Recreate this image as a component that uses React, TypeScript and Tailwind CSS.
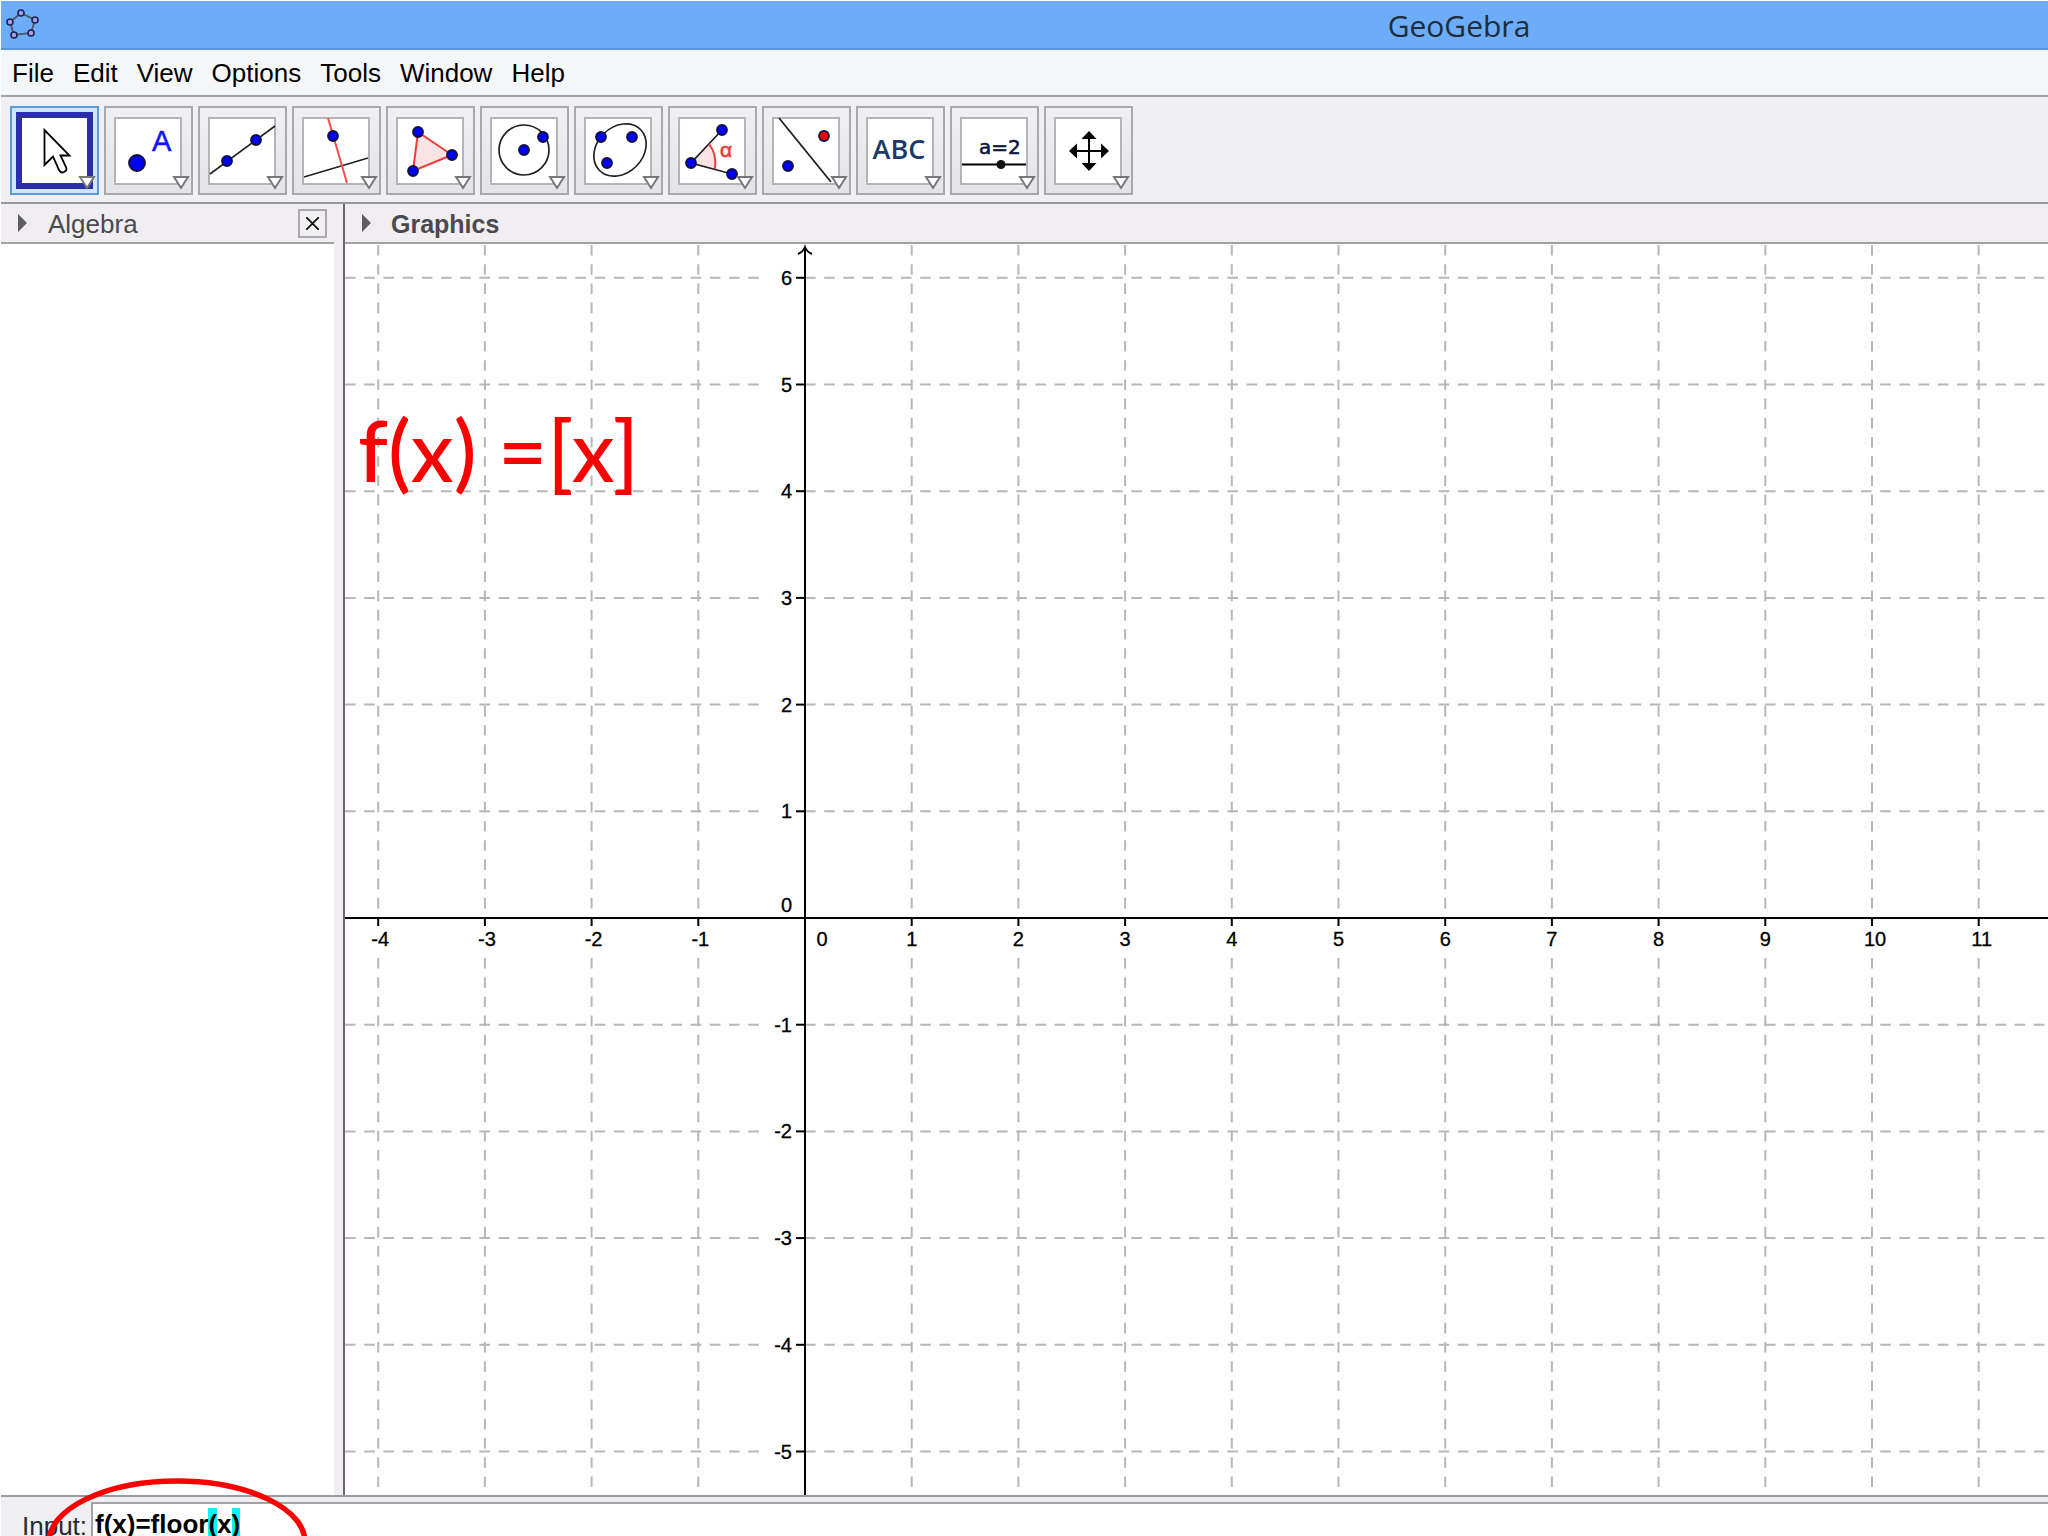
import React, { useState } from "react";

const UNIT = 106.7;
const ORIGIN_X = 460;
const ORIGIN_Y = 674;
const X_VALUES = Array.from({ length: 16 }, (_, i) => i - 4);
const Y_VALUES = Array.from({ length: 12 }, (_, i) => 6 - i);
const DASH = "10.6 8.6";

const MENUS = ["File", "Edit", "View", "Options", "Tools", "Window", "Help"];

function Dot({ x, y, r = 5, fill = "#0000f5" }: { x: number; y: number; r?: number; fill?: string }) {
  return <circle cx={x} cy={y} r={r} fill={fill} stroke="#10103c" strokeWidth="1.8" />;
}

const TOOLS: { name: string; art: React.ReactNode }[] = [
  {
    name: "Move",
    art: (
      <path
        d="M34.5 24V59L43 50.5L49 64Q51 67.5 54 66Q57.500 64.500 56 61L50.500 49.500H59.500Z"
        fill="#fff"
        stroke="#000"
        strokeWidth="1.8"
      />
    ),
  },
  {
    name: "Point",
    art: (
      <>
        <Dot x={33} y={57} r={8} />
        <text x="48" y="45" fontSize="29" fill="#1414ff" stroke="#1414ff" strokeWidth="0.5" fontFamily="Liberation Sans, sans-serif">
          A
        </text>
      </>
    ),
  },
  {
    name: "Line",
    art: (
      <>
        <path d="M12 68L77 20" stroke="#222" strokeWidth="1.7" />
        <Dot x={29} y={55} />
        <Dot x={58} y={34} />
      </>
    ),
  },
  {
    name: "Perpendicular Line",
    art: (
      <>
        <path d="M12 71L76 52" stroke="#222" strokeWidth="1.7" />
        <path d="M36 12L55 77" stroke="#fb4b4b" strokeWidth="2" />
        <Dot x={41} y={30} />
      </>
    ),
  },
  {
    name: "Polygon",
    art: (
      <>
        <path d="M32 26L66 49L27 65Z" fill="#fbe3e3" stroke="#ee3a3a" strokeWidth="2" />
        <Dot x={32} y={26} />
        <Dot x={66} y={49} />
        <Dot x={27} y={65} />
      </>
    ),
  },
  {
    name: "Circle with Center through Point",
    art: (
      <>
        <circle cx="44" cy="44" r="25" fill="none" stroke="#222" strokeWidth="1.7" />
        <Dot x={44} y={44} />
        <Dot x={63} y={31} />
      </>
    ),
  },
  {
    name: "Ellipse",
    art: (
      <>
        <ellipse cx="46" cy="44" rx="29" ry="23" transform="rotate(-45 46 44)" fill="none" stroke="#222" strokeWidth="1.7" />
        <Dot x={27} y={31} />
        <Dot x={58} y={31} />
        <Dot x={33} y={57} />
      </>
    ),
  },
  {
    name: "Angle",
    art: (
      <>
        <path d="M23 57L41 38Q49 48 47 63Z" fill="#fbe3e3" />
        <path d="M54 24L23 57L64 68" fill="none" stroke="#222" strokeWidth="1.8" />
        <path d="M41 38Q49 48 47 63" fill="none" stroke="#ee3a3a" strokeWidth="2" />
        <text x="52" y="51" fontSize="21" fill="#ee3a3a" stroke="#ee3a3a" strokeWidth="0.6" fontFamily="Liberation Sans, sans-serif">
          α
        </text>
        <Dot x={54} y={24} />
        <Dot x={23} y={57} />
        <Dot x={64} y={68} />
      </>
    ),
  },
  {
    name: "Reflect about Line",
    art: (
      <>
        <path d="M17 12L69 76" stroke="#222" strokeWidth="1.8" />
        <Dot x={62} y={30} fill="#ee0000" />
        <Dot x={26} y={60} />
      </>
    ),
  },
  {
    name: "Text",
    art: (
      <text x="43" y="53" fontSize="27" fontWeight="600" fill="#1c3a66" textAnchor="middle" fontFamily="Open Sans, sans-serif">
        ABC
      </text>
    ),
  },
  {
    name: "Slider",
    art: (
      <>
        <text x="29" y="48" fontSize="20" fill="#10183c" stroke="#10183c" strokeWidth="0.6" fontFamily="DejaVu Sans, sans-serif">
          a=2
        </text>
        <path d="M12 58.500H76" stroke="#000" strokeWidth="2" />
        <circle cx="51" cy="58.500" r="4.500" fill="#111" />
      </>
    ),
  },
  {
    name: "Move Graphics View",
    art: (
      <>
        <path d="M45 30V60M30 45H60" stroke="#000" strokeWidth="2" />
        <path d="M45 25L52.500 33H37.500ZM45 65L52.500 57H37.500ZM25 45L33 37.500V52.500ZM65 45L57 37.500V52.500Z" fill="#000" />
      </>
    ),
  },
];

function ToolButton({ name, art, active }: { name: string; art: React.ReactNode; active: boolean }) {
  return (
    <button
      type="button"
      aria-label={name}
      aria-pressed={active}
      className={
        active
          ? "size-[89px] shrink-0 border-2 border-[#5a9be0] bg-[#cfe6fc]"
          : "size-[89px] shrink-0 border-2 border-[#a9a8ab] bg-linear-to-b from-[#f0eff1] to-[#e4e3e6]"
      }
    >
      <svg viewBox="2 2 85 85" className="block size-full" aria-hidden="true">
        {active ? (
          <rect x="9" y="9" width="71" height="71" fill="#fff" stroke="#2b2fa8" strokeWidth="6" />
        ) : (
          <rect x="11" y="12" width="66" height="66" fill="#fff" stroke="#b4b3b6" strokeWidth="2" />
        )}
        {art}
        <path d="M70 71H84L77 82Z" fill="#fff" stroke="#77767a" strokeWidth="2" />
      </svg>
    </button>
  );
}

function PanelArrow() {
  return (
    <svg viewBox="0 0 10 18" className="h-[18px] w-[10px] shrink-0" aria-hidden="true">
      <path d="M0 0L9 9L0 18Z" fill="#5d5c60" />
    </svg>
  );
}

function xLabelShift(n: number) {
  return n < 0 ? 2 : n > 9 ? 3 : 0;
}

function Graph() {
  return (
    <svg className="absolute inset-0 size-full" role="img" aria-label="Coordinate plane">
      <g stroke="#b7b6b9" strokeWidth="2" strokeDasharray={DASH}>
        {X_VALUES.filter((n) => n !== 0).map((n) => {
          const x = ORIGIN_X + n * UNIT;
          return (
            <React.Fragment key={n}>
              <line x1={x} x2={x} y1="1" y2="667" />
              <line x1={x} x2={x} y1="714" y2="1246" />
            </React.Fragment>
          );
        })}
        {Y_VALUES.filter((n) => n !== 0).map((n) => {
          const y = ORIGIN_Y - n * UNIT;
          return (
            <React.Fragment key={n}>
              <line x1="0" x2="416" y1={y} y2={y} />
              <line x1={ORIGIN_X} x2="100%" y1={y} y2={y} />
            </React.Fragment>
          );
        })}
      </g>
      <g stroke="#000" strokeWidth="2" fill="none">
        <line x1={ORIGIN_X} x2={ORIGIN_X} y1="3" y2="100%" />
        <line x1="0" x2="100%" y1={ORIGIN_Y} y2={ORIGIN_Y} />
        <path d="M453 10Q458 8 460 3Q462 8 467 10" />
        {X_VALUES.filter((n) => n !== 0).map((n) => (
          <line key={n} x1={ORIGIN_X + n * UNIT} x2={ORIGIN_X + n * UNIT} y1={ORIGIN_Y} y2={ORIGIN_Y + 8} />
        ))}
        {Y_VALUES.filter((n) => n !== 0).map((n) => (
          <line key={n} x1={ORIGIN_X - 9} x2={ORIGIN_X} y1={ORIGIN_Y - n * UNIT} y2={ORIGIN_Y - n * UNIT} />
        ))}
      </g>
      <g fontSize="20" fill="#000" stroke="#000" strokeWidth="0.3" fontFamily="Liberation Sans, sans-serif">
        {X_VALUES.map((n) => (
          <text key={n} x={ORIGIN_X + n * UNIT + (n === 0 ? 17 : xLabelShift(n))} y={ORIGIN_Y + 28} textAnchor="middle">
            {n}
          </text>
        ))}
        {Y_VALUES.map((n) => (
          <text key={n} x={ORIGIN_X - 13} y={ORIGIN_Y - n * UNIT + (n === 0 ? -6 : 7)} textAnchor="end">
            {n}
          </text>
        ))}
      </g>
    </svg>
  );
}

export default function App() {
  const [command, setCommand] = useState("f(x)=floor(x)");

  return (
    <div className="relative flex h-screen flex-col overflow-hidden bg-white pt-px pl-px font-['Liberation_Sans',sans-serif] text-[26px] text-black">
      <header className="grid h-[49px] shrink-0 grid-cols-[2fr_1fr] items-center border-b-2 border-[#5a93dc] bg-[#6cacf8]">
        <svg viewBox="0 0 36 34" className="ml-1 h-[34px] w-9" aria-hidden="true">
          <path d="M16 5L30 12L26 25L9 27L5 14Z" fill="none" stroke="#4a5568" strokeWidth="1.8" />
          {[
            [16, 5],
            [30, 12],
            [26, 25],
            [9, 27],
            [5, 14],
          ].map(([x, y]) => (
            <circle key={x} cx={x} cy={y} r="3" fill="#a79cf0" stroke="#1e2550" strokeWidth="1.6" />
          ))}
        </svg>
        <h1 className="pt-[2px] pl-[22px] font-['Open_Sans',sans-serif] text-[30px] leading-[45px] text-[#1e2c3c]">GeoGebra</h1>
      </header>

      <nav className="flex h-[47px] shrink-0 items-center gap-[19px] border-b-2 border-[#a2a1a4] bg-[#f5f6f8] pl-[11px]">
        {MENUS.map((menu) => (
          <button key={menu} type="button" className="leading-[44px]">
            {menu}
          </button>
        ))}
      </nav>

      <div role="toolbar" aria-label="Tools" className="flex h-[107px] shrink-0 gap-[5px] border-b-2 border-[#9a999c] bg-[#f0eff1] pt-[9px] pl-[9px]">
        {TOOLS.map((tool, i) => (
          <ToolButton key={tool.name} name={tool.name} art={tool.art} active={i === 0} />
        ))}
      </div>

      <main className="flex min-h-0 flex-1">
        <aside className="flex w-[333px] shrink-0 flex-col">
          <div className="flex h-10 shrink-0 items-center border-b-2 border-[#a2a1a4] bg-[#f0eef1] pr-[7px] pl-[17px]">
            <PanelArrow />
            <h2 className="ml-5 pt-[2px] leading-[36px] text-[#4a494e]">Algebra</h2>
            <button type="button" aria-label="Close" className="ml-auto flex size-[29px] items-center justify-center border-2 border-[#a9a8ab] bg-[#f0eff1]">
              <svg viewBox="0 0 13 13" className="size-[13px]" aria-hidden="true">
                <path d="M0 0L13 13M13 0L0 13" stroke="#111" strokeWidth="1.8" />
              </svg>
            </button>
          </div>
          <div className="flex-1 bg-[#fefefe]" />
        </aside>
        <div className="w-[9px] shrink-0 bg-[#f0eef1]" />
        <section className="flex min-w-0 flex-1 flex-col border-l-2 border-[#6a696c]">
          <div className="flex h-10 shrink-0 items-center border-b-2 border-[#a2a1a4] bg-[#f0eef1] pl-[17px]">
            <PanelArrow />
            <h2 className="ml-[19px] pt-[2px] text-[25px] leading-[36px] font-bold text-[#4a494e]">Graphics</h2>
          </div>
          <div className="relative flex-1 overflow-hidden bg-[#fefefe]">
            <Graph />
            <p className="absolute top-[155px] left-[13px] font-['Lato',sans-serif] text-[85px] leading-[100px] font-medium whitespace-pre text-[#fb0000]">f(x) =[x]</p>
          </div>
        </section>
      </main>

      <footer className="flex h-[41px] shrink-0 items-start overflow-hidden border-t-2 border-[#9a999c] bg-[#f0eff1]">
        <label htmlFor="command" className="w-[90px] shrink-0 pt-[8px] pl-[21px] leading-[42px] text-[#2a292e]">
          Input:
        </label>
        <div className="relative mt-[5px] h-[48px] flex-1 border-2 border-r-0 border-[#a2a1a4] bg-white">
          <span className="absolute top-[4px] left-[115px] h-[34px] w-[9px] bg-[#00f8f8]" />
          <span className="absolute top-[4px] left-[139px] h-[34px] w-[8px] bg-[#00f8f8]" />
          <input
            id="command"
            type="text"
            value={command}
            onChange={(e) => setCommand(e.target.value)}
            className="relative block h-[40px] w-full bg-transparent pl-[2px] font-bold text-black outline-none"
          />
        </div>
      </footer>

      <svg viewBox="0 0 264 128" className="pointer-events-none absolute bottom-[-70px] left-[45px] h-[128px] w-[264px]" aria-hidden="true">
        <ellipse cx="132" cy="64" rx="128" ry="61" fill="none" stroke="#fb0000" strokeWidth="5.500" />
      </svg>
    </div>
  );
}
